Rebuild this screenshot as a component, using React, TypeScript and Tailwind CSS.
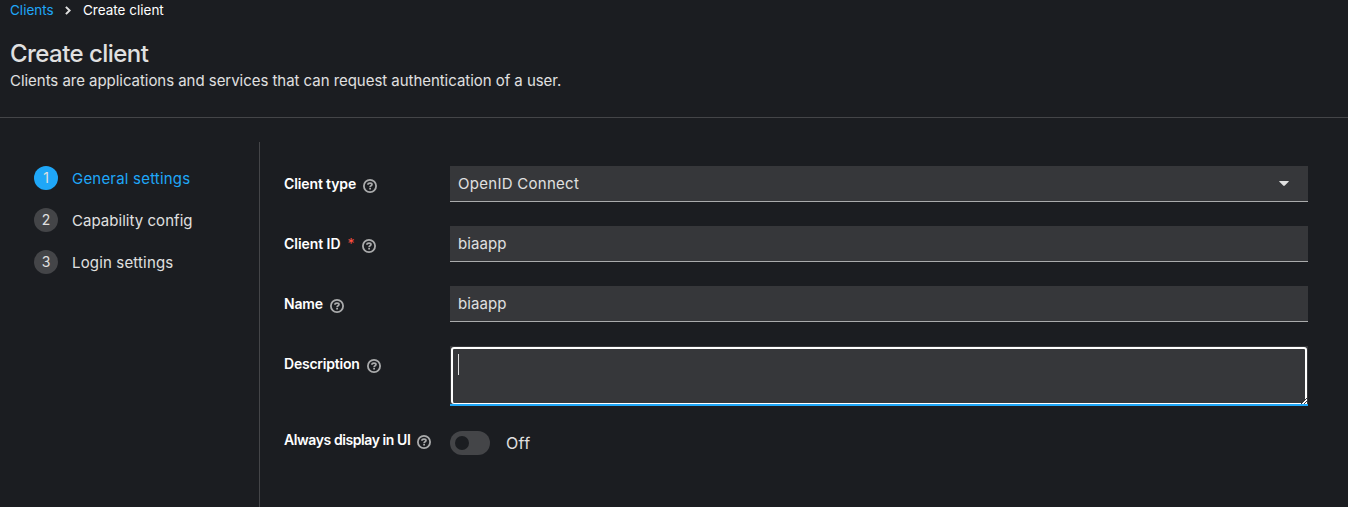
import React from "react";

function HelpIcon() {
  return (
    <svg className="h-3.5 w-3.5 shrink-0" viewBox="0 0 14 14" fill="none" stroke="#aaabac">
      <circle cx="7" cy="7" r="6.1" strokeWidth="1.8" />
      <path d="M4.9 5.7C5 4.5 5.9 4.1 7 4.1C8.2 4.1 9 4.7 9 5.6C9 6.8 7.1 6.7 7.1 8.1" strokeWidth="1.7" />
      <path d="M7.1 8.8V10.6" strokeWidth="1.8" />
    </svg>
  );
}

interface FieldProps {
  label: string;
  spacing: string;
  required?: boolean;
  height: string;
  children: React.ReactNode;
}

function Field({ label, spacing, required, height, children }: FieldProps) {
  return (
    <div className={`flex ${height}`}>
      <div className="flex h-9 w-[166px] shrink-0 items-center text-[14px] font-semibold text-white">
        <span className={`-mt-0.5 whitespace-nowrap ${spacing}`}>{label}</span>
        {required && <span className="-mt-0.5 ml-[7px] text-[14px] font-normal text-[#fe5142]">*</span>}
        <span className="ml-[7px] pt-[3px]">
          <HelpIcon />
        </span>
      </div>
      {children}
    </div>
  );
}

const steps = [
  { label: "General settings", spacing: "tracking-[0.2px]", active: true },
  { label: "Capability config", spacing: "tracking-[0.04px]", active: false },
  { label: "Login settings", spacing: "tracking-[0.16px]", active: false },
];

export default function App() {
  return (
    <div className="flex h-[507px] w-full flex-col overflow-hidden bg-[#1b1d21] font-['Inter','Liberation_Sans',sans-serif] text-[15px] text-[#e0e0e0]">
      <header className="h-[118px] shrink-0 border-b border-[#444548] px-2.5">
        <nav className="flex h-5 items-center text-[13.5px] leading-5">
          <a className="w-[55px] whitespace-nowrap text-[#1fa7f8]">Clients</a>
          <svg className="mr-3 h-[9px] w-1.5" viewBox="0 0 6 9" fill="none" stroke="#e0e0e0" strokeWidth="2">
            <path d="M.9 .9L4.6 4.5L.9 8.1" />
          </svg>
          <span className="whitespace-nowrap text-white">Create client</span>
        </nav>
        <h1 className="mt-[19px] h-[30px] text-[24px] leading-[30px] font-medium tracking-[-0.55px] whitespace-nowrap">
          Create client
        </h1>
        <p className="h-6 leading-6 tracking-[-0.04px] whitespace-nowrap">
          Clients are applications and services that can request authentication of a user.
        </p>
      </header>
      <div className="flex grow pt-6">
        <ol className="flex w-[260px] shrink-0 flex-col gap-[18px] border-r border-[#444548] pt-6 pl-[34px]">
          {steps.map((step, i) => (
            <li key={step.label} className="flex h-6 items-center gap-3.5">
              <span
                className={`flex h-6 w-6 items-center justify-center rounded-full pb-0.5 text-[14px] ${step.active ? "bg-[#1fa7f8]" : "bg-[#444548]"}`}
              >
                {i + 1}
              </span>
              <span className={`pt-0.5 whitespace-nowrap ${step.spacing} ${step.active ? "text-[#1fa7f8]" : ""}`}>{step.label}</span>
            </li>
          ))}
        </ol>
        <form className="flex grow flex-col gap-6 pt-6 pr-10 pl-6">
          <Field label="Client type" spacing="tracking-[-0.12px]" height="h-9">
            <div className="flex grow items-center justify-between border-b border-[#aaabac] bg-[#36373a] pr-[19px] pl-2">
              <span className="pt-0.5 tracking-[0.28px]">OpenID Connect</span>
              <svg className="h-[5px] w-2.5" viewBox="0 0 10 5" fill="#e0e0e0">
                <path d="M.5 0H9.5Q10 .3 9.6 .8L5.8 4.6Q5 5.2 4.2 4.6L.4 .8Q0 .3 .5 0Z" />
              </svg>
            </div>
          </Field>
          <Field label="Client ID" spacing="tracking-[-0.05px]" height="h-9" required>
            <div className="flex grow items-center border-b border-[#aaabac] bg-[#36373a] px-2 pt-0.5 tracking-[0.1px]">biaapp</div>
          </Field>
          <Field label="Name" spacing="tracking-[-0.2px]" height="h-9">
            <div className="flex grow items-center border-b border-[#aaabac] bg-[#36373a] px-2 pt-0.5 tracking-[0.1px]">biaapp</div>
          </Field>
          <Field label="Description" spacing="tracking-[-0.22px]" height="h-[60px]">
            <div className="flex grow flex-col border-b-2 border-[#1fa7f8] bg-[#36373a] px-px pt-px">
              <div className="relative grow rounded-[3px] border-2 border-b border-white pt-[5px] pl-[5px]">
                <div className="h-[21px] w-px bg-[#e0e0e0]" />
                <svg className="absolute -right-0.5 -bottom-px h-1.5 w-1.5" viewBox="0 0 6 6">
                  <path d="M0 6L6 0V6Z" fill="#fff" />
                  <path d="M0 6L6 0M3 6L6 3" stroke="#36373a" fill="none" />
                </svg>
              </div>
            </div>
          </Field>
          <div className="-mt-2">
            <Field label="Always display in UI" spacing="tracking-[-0.42px]" height="h-9">
              <div className="flex items-center gap-4 pt-1.5">
                <span className="flex h-6 w-10 items-center rounded-full bg-[#444548] pl-[5px]">
                  <span className="h-3.5 w-3.5 rounded-full bg-[#1b1d21]" />
                </span>
                <span className="text-[16px] tracking-[0.3px]">Off</span>
              </div>
            </Field>
          </div>
        </form>
      </div>
    </div>
  );
}
